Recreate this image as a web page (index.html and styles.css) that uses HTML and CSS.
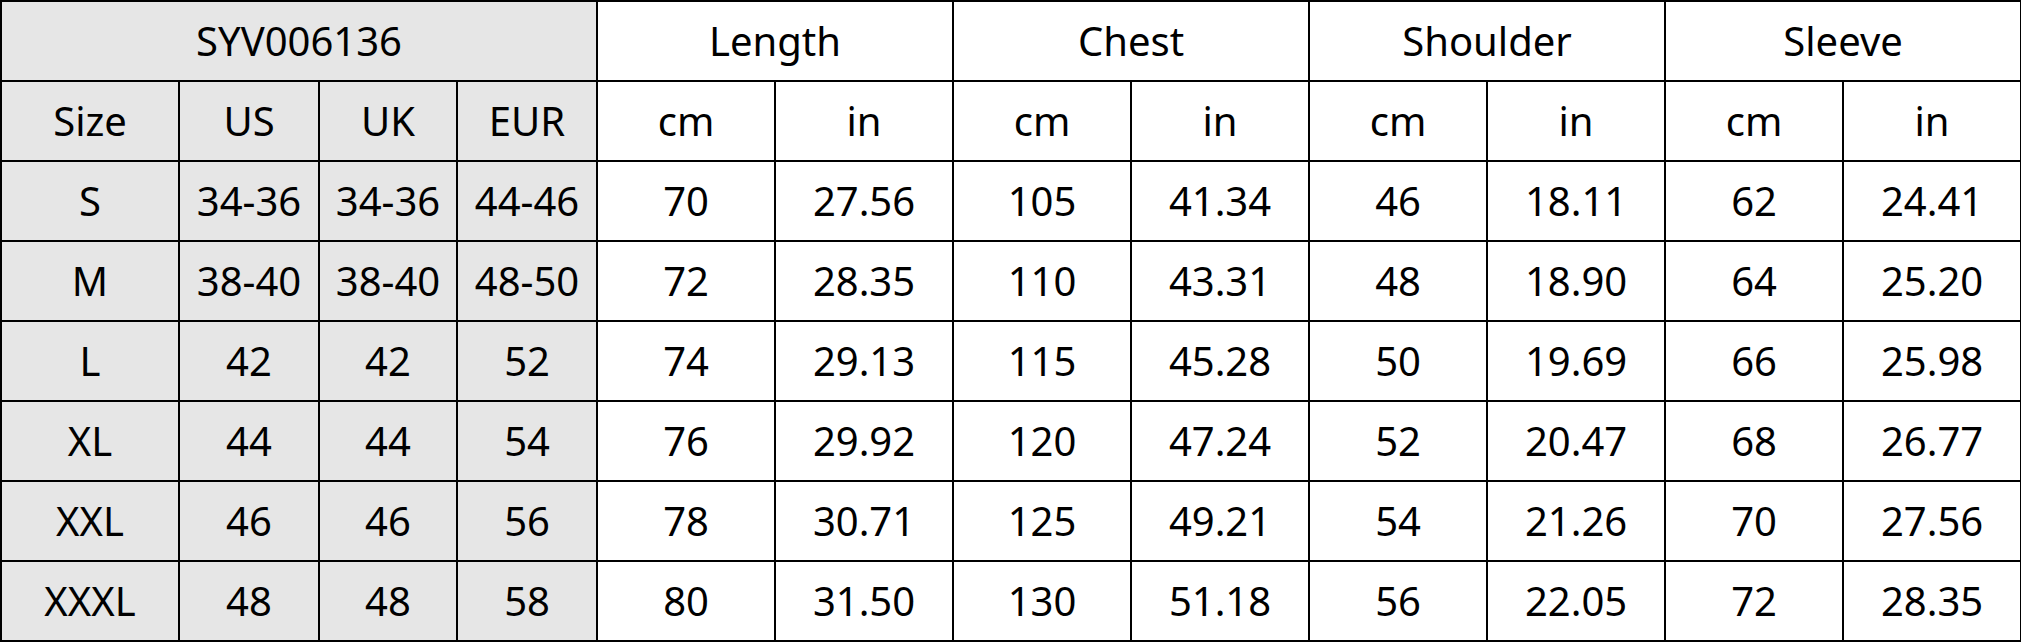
FILE: index.html
```html
<!DOCTYPE html>
<html>
<head>
<meta charset="utf-8">
<link rel="stylesheet" href="styles.css">
</head>
<body>
<table class="chart">
<colgroup>
<col class="c1"><col class="c2"><col class="c3"><col class="c4">
<col class="m"><col class="m"><col class="m"><col class="m">
<col class="m"><col class="m"><col class="m"><col class="m">
</colgroup>
<tr>
<td class="g" colspan="4">SYV006136</td>
<td colspan="2">Length</td>
<td colspan="2">Chest</td>
<td colspan="2">Shoulder</td>
<td colspan="2">Sleeve</td>
</tr>
<tr>
<td class="g">Size</td><td class="g">US</td><td class="g">UK</td><td class="g">EUR</td>
<td>cm</td><td>in</td><td>cm</td><td>in</td><td>cm</td><td>in</td><td>cm</td><td>in</td>
</tr>
<tr>
<td class="g">S</td><td class="g">34-36</td><td class="g">34-36</td><td class="g">44-46</td>
<td>70</td><td>27.56</td><td>105</td><td>41.34</td><td>46</td><td>18.11</td><td>62</td><td>24.41</td>
</tr>
<tr>
<td class="g">M</td><td class="g">38-40</td><td class="g">38-40</td><td class="g">48-50</td>
<td>72</td><td>28.35</td><td>110</td><td>43.31</td><td>48</td><td>18.90</td><td>64</td><td>25.20</td>
</tr>
<tr>
<td class="g">L</td><td class="g">42</td><td class="g">42</td><td class="g">52</td>
<td>74</td><td>29.13</td><td>115</td><td>45.28</td><td>50</td><td>19.69</td><td>66</td><td>25.98</td>
</tr>
<tr>
<td class="g">XL</td><td class="g">44</td><td class="g">44</td><td class="g">54</td>
<td>76</td><td>29.92</td><td>120</td><td>47.24</td><td>52</td><td>20.47</td><td>68</td><td>26.77</td>
</tr>
<tr>
<td class="g">XXL</td><td class="g">46</td><td class="g">46</td><td class="g">56</td>
<td>78</td><td>30.71</td><td>125</td><td>49.21</td><td>54</td><td>21.26</td><td>70</td><td>27.56</td>
</tr>
<tr>
<td class="g">XXXL</td><td class="g">48</td><td class="g">48</td><td class="g">58</td>
<td>80</td><td>31.50</td><td>130</td><td>51.18</td><td>56</td><td>22.05</td><td>72</td><td>28.35</td>
</tr>
</table>
</body>
</html>
```
FILE: styles.css
```css
html, body {
  margin: 0;
  padding: 0;
  background: #ffffff;
}
.chart {
  border-collapse: collapse;
  table-layout: fixed;
  width: 2021px;
  font-family: "Noto Sans", "Open Sans", sans-serif;
  font-size: 40px;
  color: #000;
}
.c1 { width: 178px; }
.c2 { width: 140px; }
.c3 { width: 138px; }
.c4 { width: 140px; }
.m { width: 178px; }
.chart td {
  height: 78px;
  padding: 0;
  border: 2px solid #000;
  text-align: center;
  vertical-align: middle;
  white-space: nowrap;
  line-height: 1;
}
.chart td.g {
  background: #e6e6e6;
}
```
